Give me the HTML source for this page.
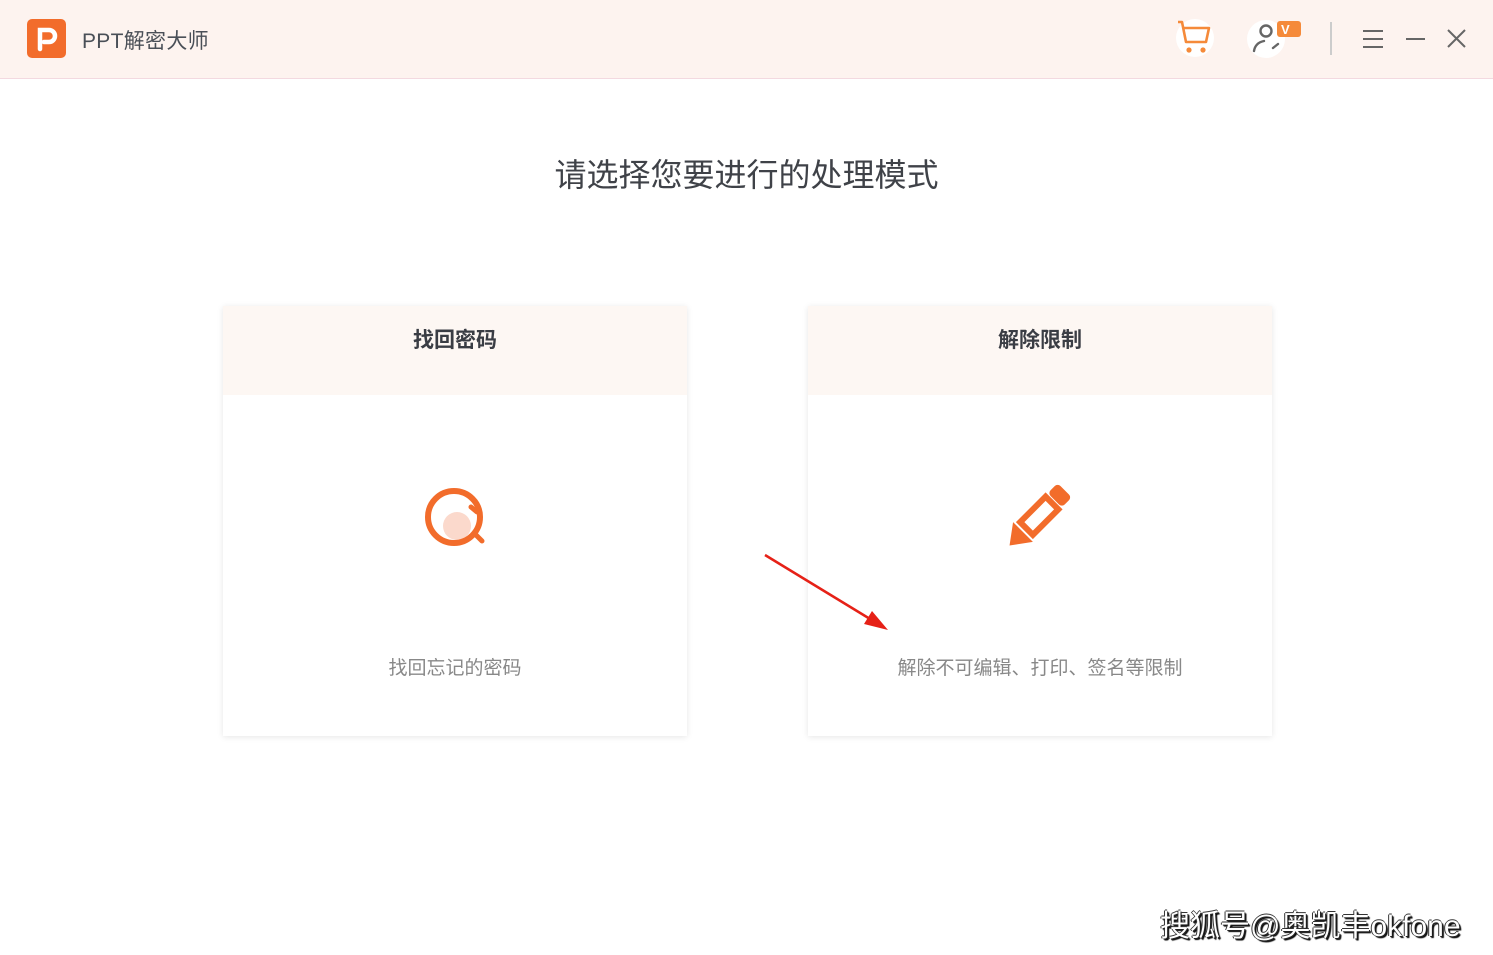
<!DOCTYPE html>
<html><head><meta charset="utf-8"><style>
*{margin:0;padding:0;box-sizing:border-box}
body{width:1493px;height:955px;background:#fff;position:relative;overflow:hidden;font-family:"Liberation Sans","Noto Sans CJK SC",sans-serif}
.top{position:absolute;left:0;top:0;width:1493px;height:79px;background:#fdf3ef;border-bottom:1px solid #f3d9e0}
.logo{position:absolute;left:27px;top:19px;width:39px;height:39px;background:#f26c2b;border-radius:5px}
.title{position:absolute;left:82px;top:25px;font-size:21px;color:#4a4f57;letter-spacing:.3px}
h1{position:absolute;left:0;width:1493px;top:150px;text-align:center;font-weight:normal;font-size:32px;color:#3f4248;letter-spacing:0}
.card{position:absolute;top:306px;width:464px;height:430px;background:#fff;box-shadow:0 1px 6px rgba(0,0,0,.1)}
.card .hd{height:89px;background:#fdf7f3;text-align:center;padding-top:18px;font-size:21px;font-weight:bold;color:#3a3d44}
.card .ds{position:absolute;top:347px;width:100%;text-align:center;font-size:19px;color:#888}
.wm{position:absolute;left:1160px;top:901px;font-size:30px;color:#fff;text-shadow:1px 1px 0 #222,-1px 0 0 #333,0 -1px 0 #333,2px 2px 1px #000;letter-spacing:0}
</style></head><body>
<div class="top">
<div class="logo"><svg width="39" height="39"><path d="M13 30V11h9a6 6 0 0 1 0 12h-5" fill="none" stroke="#fff" stroke-width="4.5" stroke-linecap="round"/></svg></div>
<div class="title">PPT解密大师</div>
<svg style="position:absolute;left:1175px;top:18px" width="40" height="40"><circle cx="20" cy="20" r="19" fill="#fff"/><path d="M3 4h4l4 20h20l3-14H9" fill="none" stroke="#f58a3a" stroke-width="2.6" stroke-linejoin="round"/><circle cx="14" cy="32" r="2.6" fill="#f58a3a"/><circle cx="28" cy="32" r="2.6" fill="#f58a3a"/></svg>
<svg style="position:absolute;left:1245px;top:18px" width="60" height="42"><circle cx="21" cy="21" r="19" fill="#fff"/><circle cx="21" cy="13" r="5.5" fill="none" stroke="#666" stroke-width="2.4"/><path d="M9 33c1-6 5-9 10-10M28 30l5-4" fill="none" stroke="#666" stroke-width="2.4" stroke-linecap="round"/><rect x="32" y="3" width="24" height="16" rx="3" fill="#f58a3a"/><text x="36" y="16" font-size="13" font-weight="bold" fill="#fff" font-family="Liberation Sans">V</text></svg>
<div style="position:absolute;left:1330px;top:22px;width:2px;height:33px;background:#ccc"></div>
<svg style="position:absolute;left:1360px;top:28px" width="110" height="24"><path d="M3 3h20M3 11h20M3 19h20M46 11h19M88 2l17 17M105 2L88 19" stroke="#666" stroke-width="2"/></svg>
</div>
<h1>请选择您要进行的处理模式</h1>
<div class="card" style="left:223px"><div class="hd">找回密码</div>
<svg style="position:absolute;left:196px;top:176px" width="70" height="70"><circle cx="38" cy="44" r="14" fill="#fbd9cc"/><circle cx="35" cy="35" r="26" fill="none" stroke="#f26c2b" stroke-width="6"/><path d="M52 25l6 5M56 52l7 7" stroke="#f26c2b" stroke-width="5" stroke-linecap="round"/></svg>
<div class="ds">找回忘记的密码</div></div>
<div class="card" style="left:808px"><div class="hd">解除限制</div>
<svg style="position:absolute;left:191px;top:178px" width="76" height="76"><g transform="rotate(45 36 36)"><rect x="26" y="-6" width="20" height="14" rx="4" fill="#f26c2b"/><rect x="27" y="12" width="18" height="36" fill="none" stroke="#f26c2b" stroke-width="6"/><path d="M22 53h28L36 72z" fill="#f26c2b"/></g></svg>
<div class="ds">解除不可编辑、打印、签名等限制</div></div>
<svg style="position:absolute;left:760px;top:550px" width="140" height="90"><path d="M5 5L115 72" stroke="#e62117" stroke-width="2.5"/><path d="M128 80L104 74 112 61z" fill="#e62117"/></svg>
<div class="wm">搜狐号@奥凯丰okfone</div>
</body></html>
